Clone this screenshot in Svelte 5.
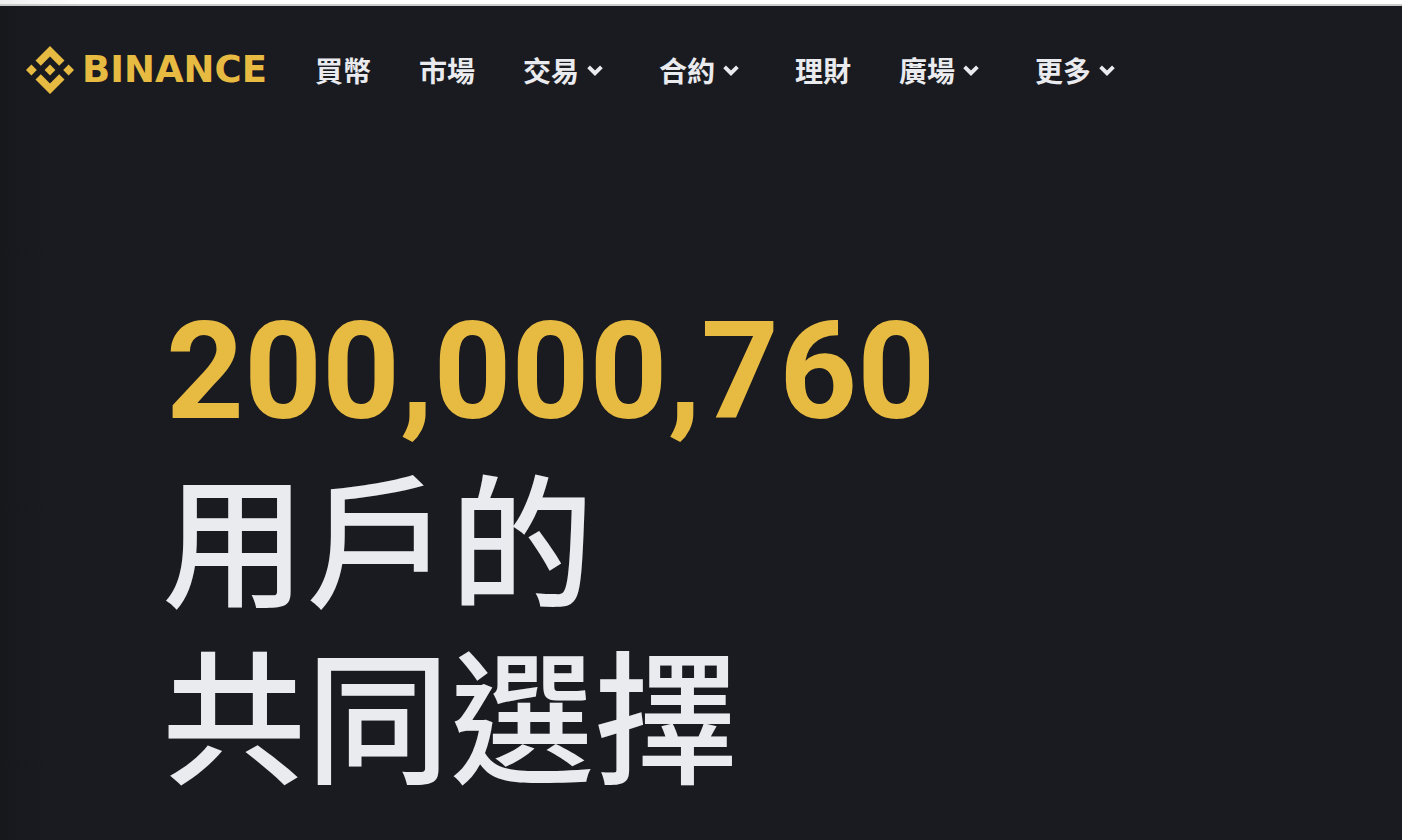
<script>
  const brand = "BINANCE";
  const userCount = 200000760;

  const navItems = [
    { label: "買幣", href: "#buy" },
    { label: "市場", href: "#markets" },
    { label: "交易", menu: true },
    { label: "合約", menu: true },
    { label: "理財", href: "#earn" },
    { label: "廣場", menu: true },
    { label: "更多", menu: true },
  ];
</script>

<div class="page">
  <div class="top-strip"></div>

  <header class="header">
    <a class="logo" href="#home">
      <svg class="logo-mark" viewBox="0 0 48 48" aria-hidden="true">
        <path d="M24 0 38.5 14.5 33.2 19.8 24 10.6 14.8 19.8 9.5 14.5Z" />
        <path d="M24 48 9.5 33.5 14.8 28.2 24 37.4 33.2 28.2 38.5 33.5Z" />
        <path d="M5.4 18.6 10.8 24 5.4 29.4 0 24Z" />
        <path d="M42.6 18.6 48 24 42.6 29.4 37.2 24Z" />
        <path d="M24 18.6 29.4 24 24 29.4 18.6 24Z" />
      </svg>
      <span class="logo-text">{brand}</span>
    </a>

    <nav class="nav">
      {#each navItems as item}
        {#if item.menu}
          <button class="nav-item" type="button" aria-haspopup="true">
            {item.label}
            <svg class="chevron" viewBox="0 0 32 32" aria-hidden="true">
              <path d="M9.6 12.8 16 19.2 22.4 12.8" />
            </svg>
          </button>
        {:else}
          <a class="nav-item" href={item.href}>{item.label}</a>
        {/if}
      {/each}
    </nav>
  </header>

  <main class="hero">
    <h1>
      <span class="count">{userCount.toLocaleString("en-US")}</span>
      <span class="line">用戶的</span>
      <span class="line">共同選擇</span>
    </h1>
  </main>
</div>

<style>
  :global(body) {
    margin: 0;
    background: #1a1b20;
  }

  .page {
    min-height: 100vh;
    overflow: hidden;

    background: linear-gradient(to right, #17181c, #1a1b20 48px);

    color: #eaebef;

    font-family: "Noto Sans CJK TC", sans-serif;
  }

  .top-strip {
    height: 4px;

    background: linear-gradient(to right, #eeeeee, #ffffff 80px);

    border-bottom: 2px solid #c9cbcb;
  }

  .header {
    display: flex;
    align-items: center;
    gap: 48px;

    height: 128px;
    padding: 0 26px;
  }

  .logo {
    display: flex;
    align-items: center;
    gap: 8px;

    color: #e7ba41;

    text-decoration: none;
  }

  .logo-mark {
    width: 48px;
    height: 48px;

    fill: currentColor;
  }

  .logo-text {
    font-family: "DejaVu Sans", sans-serif;
    font-size: 37px;
    font-weight: 700;
    line-height: 48px;
  }

  .nav {
    display: flex;
    align-items: center;
    gap: 48px;
  }

  .nav-item {
    display: flex;
    align-items: center;

    padding: 0;

    background: none;
    border: 0;

    color: inherit;

    font-family: inherit;
    font-size: 28px;
    font-weight: 700;
    line-height: 40px;
    white-space: nowrap;
    text-decoration: none;

    cursor: pointer;
  }

  .nav-item:hover {
    color: #e7ba41;
  }

  .chevron {
    width: 32px;
    height: 32px;

    fill: none;
    stroke: currentColor;
    stroke-width: 3.8;
  }

  .hero {
    padding: 164px 162px 24px;
  }

  h1 {
    margin: 0;

    font-size: 144px;
    font-weight: 500;
    line-height: 176px;
  }

  h1 span {
    display: block;

    white-space: nowrap;
  }

  .count {
    padding-left: 4px;

    color: #e7ba41;

    font-family: Roboto, sans-serif;
    font-size: 136px;
    font-weight: 700;
    line-height: 148px;
  }
</style>
